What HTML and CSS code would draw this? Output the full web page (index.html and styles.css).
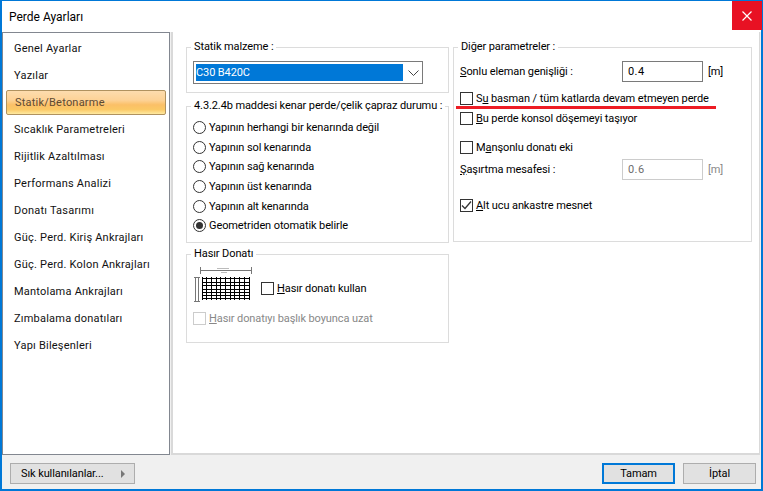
FILE: index.html
```html
<!DOCTYPE html>
<html lang="tr">
<head>
<meta charset="utf-8">
<title>Perde Ayarları</title>
<link rel="stylesheet" href="styles.css">
</head>
<body>
<div class="window">
  <header class="titlebar">
    <span class="title">Perde Ayarları</span>
    <button class="close" aria-label="Kapat">
      <svg width="10" height="10" viewBox="0 0 10 10"><path d="M0.5 0.5L9.5 9.5M9.5 0.5L0.5 9.5" stroke="#fff" stroke-width="1.2" fill="none"/></svg>
    </button>
  </header>
  <div class="main">
    <nav class="side">
      <div class="nav">Genel Ayarlar</div>
      <div class="nav">Yazılar</div>
      <div class="nav active">Statik/Betonarme</div>
      <div class="nav">Sıcaklık Parametreleri</div>
      <div class="nav">Rijitlik Azaltılması</div>
      <div class="nav">Performans Analizi</div>
      <div class="nav">Donatı Tasarımı</div>
      <div class="nav">Güç. Perd. Kiriş Ankrajları</div>
      <div class="nav">Güç. Perd. Kolon Ankrajları</div>
      <div class="nav">Mantolama Ankrajları</div>
      <div class="nav">Zımbalama donatıları</div>
      <div class="nav">Yapı Bileşenleri</div>
    </nav>
    <section class="content">
      <div class="col col-left">
        <fieldset class="group g-mat">
          <legend>Statik malzeme :</legend>
          <div class="combo">
            <span class="combo-val">C30 B420C</span>
            <svg class="chev" width="11" height="6" viewBox="0 0 11 6"><path d="M0.5 0.5L5.5 5.5L10.5 0.5" stroke="#444" fill="none"/></svg>
          </div>
        </fieldset>
        <fieldset class="group g-radio">
          <legend>4.3.2.4b maddesi kenar perde/çelik çapraz durumu :</legend>
          <div class="radio"><i class="rb"></i>Yapının herhangi bir kenarında değil</div>
          <div class="radio"><i class="rb"></i>Yapının sol kenarında</div>
          <div class="radio"><i class="rb"></i>Yapının sağ kenarında</div>
          <div class="radio"><i class="rb"></i>Yapının üst kenarında</div>
          <div class="radio"><i class="rb"></i>Yapının alt kenarında</div>
          <div class="radio"><i class="rb on"></i>Geometriden otomatik belirle</div>
        </fieldset>
        <fieldset class="group g-mesh">
          <legend>Hasır Donatı</legend>
          <div class="mesh-row">
            <svg class="mesh" width="60" height="37" viewBox="0 0 60 37">
              <g stroke="#777" fill="none">
                <path d="M7 4.5H59M7.5 1V8M58.5 1V8"/>
                <path d="M1 11.5H7M1 35.5H7M2.5 11V36M5.5 11V36"/>
              </g>
              <path d="M24 2.5H36M28 6.5H34" stroke="#bbb" fill="none"/>
              <path d="M9 12.5H57M9 16.5H57M9 19.5H57M9 23.5H57M9 26.5H57M9 29.5H57M9 32.5H57M9.5 11V34M13.5 11V34M18.5 11V34M23.5 11V34M27.5 11V34M32.5 11V34M37.5 11V34M41.5 11V34M46.5 11V34M51.5 11V34M56.5 11V34" stroke="#000" fill="none"/>
            </svg>
            <label class="check"><i class="cb"></i><span><u>H</u>asır donatı kullan</span></label>
          </div>
          <label class="check disabled"><i class="cb"></i><span><u>H</u>asır donatıyı başlık boyunca uzat</span></label>
        </fieldset>
      </div>
      <div class="col col-right">
        <fieldset class="group g-other">
          <legend>Diğer parametreler :</legend>
          <div class="field f1">
            <span class="field-label"><u>S</u>onlu eleman genişliği :</span>
            <span class="input">0.4</span>
            <span class="unit">[m]</span>
          </div>
          <label class="check c1"><i class="cb"></i><span>S<u>u</u> basman / tüm katlarda devam etmeyen perde</span></label>
          <label class="check c2"><i class="cb"></i><span><u>B</u>u perde konsol döşemeyi taşıyor</span></label>
          <label class="check c3"><i class="cb"></i><span>M<u>a</u>nşonlu donatı eki</span></label>
          <div class="field f2">
            <span class="field-label"><u>Ş</u>aşırtma mesafesi :</span>
            <span class="input off">0.6</span>
            <span class="unit off">[m]</span>
          </div>
          <label class="check c4"><i class="cb"><svg width="13" height="13" viewBox="0 0 13 13"><path d="M2 6.5L5 9.5L11 2.5" stroke="#333" stroke-width="1.3" fill="none"/></svg></i><span><u>A</u>lt ucu ankastre mesnet</span></label>
        </fieldset>
        <div class="redline"></div>
      </div>
    </section>
  </div>
  <footer class="footer">
    <button class="btn fav"><span>Sık kullanılanlar...</span><i class="tri"></i></button>
    <div class="actions">
      <button class="btn ok">Tamam</button>
      <button class="btn">İptal</button>
    </div>
  </footer>
</div>
</body>
</html>
```
FILE: styles.css
```css
* { box-sizing: border-box; }
html, body { margin: 0; padding: 0; }
body { width: 763px; height: 491px; overflow: hidden; font-family: Roboto, "Noto Sans", sans-serif; font-size: 11px; letter-spacing: -0.1px; color: #000; }
.window { width: 763px; height: 491px; background: #f0f0f0; border: 1px solid #0078d7; border-width: 1px 2px 2px 2px; display: flex; flex-direction: column; }
.titlebar { height: 31px; background: #fff; display: flex; align-items: center; justify-content: space-between; flex: none; }
.title { font-size: 12px; letter-spacing: 0; padding-left: 7px; }
.close { width: 30px; height: 29px; margin: 0 -1px 2px 0; background: #e81123; border: 0; padding: 0; display: flex; align-items: center; justify-content: center; }
.main { height: 423px; display: flex; flex: none; margin-right: 1px; }
.side { width: 168px; background: #fff; border: 1px solid #828790; padding: 3px 3px 0 3px; flex: none; }
.nav { height: 27px; line-height: 25px; padding-left: 8px; letter-spacing: 0.22px; color: #111; }
.nav.active { height: 25px; margin: 0 0 2px; line-height: 24px; color: #5d4a32; border: 1px solid #b0925f; border-radius: 2px; background: linear-gradient(#fddcae 0%, #fdd296 40%, #fbc067 60%, #fbc865 80%, #fee9a0 100%); }
.content { flex: 1; margin-left: 1px; background: #fff; border: 1px solid #d9d9d9; border-width: 0 1px 2px 2px; display: flex; gap: 4px; padding: 8px 0 0 13px; }
.col { width: 263px; }
.col-right { width: 299px; position: relative; }
.group { margin: 0; border: 1px solid #dcdcdc; padding: 0; min-width: 0; }
.group legend { margin-left: -2px; padding: 0 3px; line-height: 14px; height: 14px; white-space: nowrap; }
.g-mat { height: 53px; padding: 7px 0 0 6px; }
.combo { width: 230px; height: 23px; border: 1px solid #7a7a7a; padding: 2px; display: flex; align-items: center; }
.combo-val { display: block; width: 207px; height: 17px; line-height: 17px; background: #0078d7; color: #fff; }
.chev { margin-left: 5px; }
.g-radio { margin-top: 6px; height: 144px; padding: 5px 0 0 6px; }
.radio { height: 19.6px; display: flex; align-items: center; gap: 3px; }
.rb { width: 13px; height: 13px; border: 1px solid #333; border-radius: 50%; background: #fff; flex: none; display: flex; align-items: center; justify-content: center; }
.rb.on::after { content: ""; width: 7px; height: 7px; border-radius: 50%; background: #333; }
.g-mesh { margin-top: 4px; height: 96px; padding: 0 0 0 6px; }
.mesh-row { display: flex; align-items: center; gap: 8px; height: 37px; margin-top: 5px; }
.mesh { flex: none; }
.mesh-row .check { margin-top: 7px; }
.check { display: flex; align-items: center; gap: 3px; height: 16px; white-space: nowrap; }
.cb { width: 13px; height: 13px; border: 1px solid #333; background: #fff; flex: none; display: block; }
.cb svg { display: block; margin: -1px; }
.disabled { color: #888; margin-top: 7px; }
.disabled .cb { border-color: #ccc; background: #fff; }
.g-other { height: 202px; padding: 0 0 0 6px; position: relative; }
.field { display: flex; align-items: center; }
.field-label { width: 162px; }
.input { width: 81px; height: 21px; border: 1px solid #7a7a7a; line-height: 19px; padding-left: 5px; letter-spacing: 0.4px; }
.input.off { border-color: #ccc; color: #6d6d6d; }
.unit { margin-left: 5px; }
.unit.off { color: #888; }
.f1 { margin-top: 7px; }
.c1 { margin-top: 8px; }
.c2 { margin-top: 4px; }
.c3 { margin-top: 13px; }
.f2 { margin-top: 4px; }
.c4 { margin-top: 17px; }
.redline { position: absolute; left: 3px; top: 66px; width: 260px; height: 3px; background: #ed1c24; }
.footer { flex: 1; display: flex; justify-content: space-between; align-items: flex-start; padding: 8px 5px 0 8px; }
.btn { height: 21px; background: #e1e1e1; border: 1px solid #adadad; font: inherit; letter-spacing: inherit; color: #000; padding: 0; width: 73px; }
.actions { display: flex; gap: 8px; }
.ok { border: 2px solid #0078d7; }
.fav { width: 125px; display: flex; align-items: center; justify-content: space-between; padding: 0 9px 0 10px; }
.tri { width: 0; height: 0; border-left: 4px solid #777; border-top: 4px solid transparent; border-bottom: 4px solid transparent; }
```
